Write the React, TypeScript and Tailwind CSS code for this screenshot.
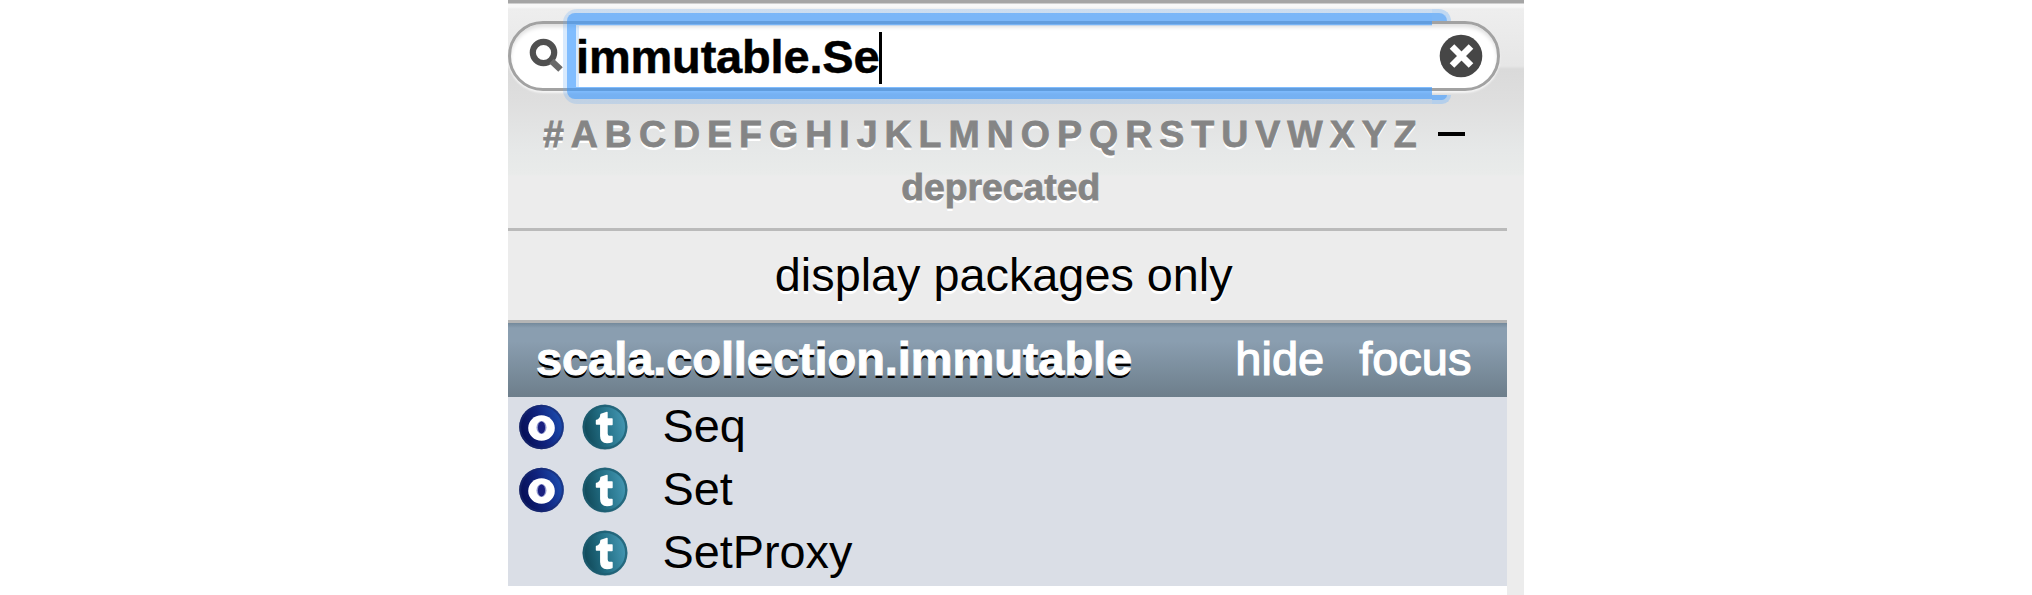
import React from "react";

const LETTERS = "#ABCDEFGHIJKLMNOPQRSTUVWXYZ";

const ENTRIES = [
  { name: "Seq", companion: true },
  { name: "Set", companion: true },
  { name: "SetProxy", companion: false },
];

function ObjectIcon() {
  return (
    <svg viewBox="0 0 46 46" className="size-[46px]">
      <defs>
        <linearGradient id="obj" x1="0" y1="0.65" x2="1" y2="0.35">
          <stop offset="0" stopColor="#050d52" />
          <stop offset="0.5" stopColor="#10237e" />
          <stop offset="1" stopColor="#1c4fb2" />
        </linearGradient>
      </defs>
      <circle cx="23.500" cy="23" r="22.300" fill="url(#obj)" />
      <circle cx="23.500" cy="23" r="21.300" fill="none" stroke="#1a2c6e" strokeOpacity="0.6" strokeWidth="2" />
      <ellipse cx="23.500" cy="24" rx="13.300" ry="12.700" fill="#fff" />
      <ellipse cx="23.500" cy="23.500" rx="5" ry="6.500" fill="#8c94cc" />
      <ellipse cx="23.500" cy="23.500" rx="3.600" ry="6" fill="#1a2080" />
    </svg>
  );
}

function TraitIcon() {
  return (
    <svg viewBox="0 0 46 46" className="size-[46px]">
      <defs>
        <linearGradient id="trait" x1="0" y1="0.6" x2="1" y2="0.4">
          <stop offset="0" stopColor="#0f4655" />
          <stop offset="0.45" stopColor="#226d83" />
          <stop offset="1" stopColor="#4599b5" />
        </linearGradient>
      </defs>
      <circle cx="23" cy="23" r="22.300" fill="url(#trait)" />
      <circle cx="23" cy="23" r="21.300" fill="none" stroke="#1d5c70" strokeOpacity="0.75" strokeWidth="2.400" />
      <path
        d="M19 10.500Q22 9.500 25 8.500V15H30V20.500H25V29.500Q25 32.500 27.500 32.500H30V37.500Q28 38.500 25 38.500Q18.800 38.500 18.800 32V20H14.500V16.500Q18.600 15.500 19 10.500Z"
        fill="#fff"
        stroke="#fff"
        strokeWidth="1.400"
        strokeLinejoin="round"
      />
    </svg>
  );
}

function SearchField() {
  return (
    <div className="relative mt-[14px] h-[70px] w-[992px]">
      <div className="flex h-full items-center rounded-full border-[3px] border-[#a2a2a2] bg-white pr-[14px] pl-[17px] shadow-[0_2px_2px_#f5f5f5,inset_0_4px_4px_-1px_#dedede]">
        <svg viewBox="0 0 38 38" className="size-[38px] shrink-0">
          <circle cx="15.500" cy="15.500" r="10.700" fill="none" stroke="#505050" strokeWidth="6.200" />
          <path d="M23.500 24L32.500 32.500" stroke="#6a6a6a" strokeWidth="6.500" />
        </svg>
        <div className="ml-[10px] flex grow items-center font-bold whitespace-pre">
          <span className="mt-[2px] leading-[60px] tracking-[-0.180px] [-webkit-text-stroke:0.5px_#000]">immutable.Se</span>
          <span className="mt-[4px] h-[52px] w-[3px] bg-black" />
        </div>
        <svg viewBox="0 0 44 44" className="relative z-10 size-[44px] shrink-0">
          <circle cx="22" cy="22" r="21.300" fill="#464646" />
          <path d="M13 12.500L32 31.500M32 12.500L13 31.500" stroke="#fff" strokeWidth="6.500" />
        </svg>
      </div>
      <div className="absolute top-[-12px] left-[55px] h-[95px] w-[869px] rounded-l-[14px] border-y-[17px] border-l-[16px] border-[#68adf7]/25" />
      <div className="absolute top-[-8px] left-[59px] h-[86px] w-[865px] rounded-l-[8px] border-y-[12px] border-l-[9px] border-[#3a98ff]/55" />
      <div className="absolute top-[-12px] left-[924px] h-[12px] w-[19px] rounded-tr-[14px] border-t-[4px] border-r-[4px] border-[#c0d8f2] bg-[#7db7f6]" />
      <div className="absolute top-[74px] left-[924px] h-[9px] w-[19px] rounded-br-[14px] border-r-[4px] border-b-[4px] border-[#b5cfeb] bg-[#79b3f3]" />
    </div>
  );
}

export default function App() {
  return (
    <div className="flex h-[595px] w-[2032px] justify-center overflow-hidden bg-white font-['Liberation_Sans',Arial,sans-serif] text-[47px] text-black">
      <div className="flex h-full w-[1016px] bg-[#ececec] bg-[linear-gradient(180deg,#a5a5a5_0px,#a5a5a5_3px,#f8f8f8_4px,#f8f8f8_7px,#eeeeee_9px,#e6e6e6_66px,#dadada_69px,#dedede_100px,#e6e8e8_150px,#e9ebea_174px,#ececec_176px)]">
        <div className="flex w-[998.5px] flex-col">
          <div className="flex h-[231px] flex-col border-b-[3px] border-[#bababa] pt-[7px]">
            <SearchField />
            <div className="mt-[17px] flex flex-col items-center pr-[7px] text-[37.5px] leading-[53px] font-bold text-[#858585] [-webkit-text-stroke:0.8px_#858585] [text-shadow:0_3px_0_#fff]">
              <div className="flex h-[53px] items-center whitespace-pre">
                <span className="tracking-[7px]">{LETTERS}</span>
                <span className="mb-px ml-[14px] h-[4px] w-[27px] bg-black" />
              </div>
              <div className="pr-[6px] text-[37.300px]">deprecated</div>
            </div>
          </div>
          <div className="flex h-[92px] items-center justify-center border-b-[3px] border-[#b5b5b5] pr-[7px] pb-px text-[46.800px] leading-[54px] [text-shadow:0_3px_0_#fff]">
            display packages only
          </div>
          <div className="flex h-[73.500px] items-center bg-[linear-gradient(180deg,#74899b_0px,#8a9eb0_5px,#8a9eb0_18px,#6d7e8b_100%)] pr-[35px] pb-px pl-[28px] leading-[54px] text-white">
            <span className="grow font-bold tracking-[-0.080px] [-webkit-text-stroke:1px_#fff] [text-shadow:0_3px_0_#000]">scala.collection.immutable</span>
            <span className="[-webkit-text-stroke:1.2px_#fff]">hide</span>
            <span className="ml-[35px] [-webkit-text-stroke:1.2px_#fff]">focus</span>
          </div>
          <div className="bg-[#dadee6]">
            {ENTRIES.map((entry) => (
              <div key={entry.name} className="flex h-[63.300px] items-center pl-[10px]">
                <div className="mb-[3px] size-[46px]">{entry.companion && <ObjectIcon />}</div>
                <div className="mb-[3px] ml-[17.500px] size-[46px]">
                  <TraitIcon />
                </div>
                <span className="mb-[5px] ml-[35px] text-[46.800px] leading-[54px]">{entry.name}</span>
              </div>
            ))}
          </div>
          <div className="grow bg-white" />
        </div>
      </div>
    </div>
  );
}
